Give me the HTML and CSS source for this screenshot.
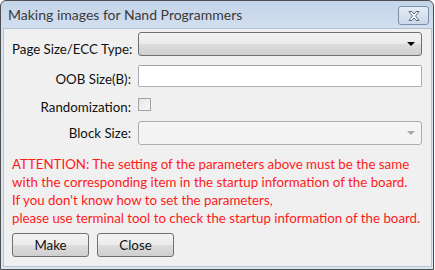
FILE: index.html
```html
<!doctype html>
<html lang="en">
<head>
<meta charset="utf-8">
<title>Making images for Nand Programmers</title>
<link rel="stylesheet" href="styles.css">
</head>
<body>
<div class="window">
  <div class="titlebar">
    <span class="title">Making images for Nand Programmers</span>
    <button type="button" class="btn-close" aria-label="Close">
      <svg width="16" height="12" viewBox="0 0 16 12">
        <path d="M3 1.5h3l2 2.6 2-2.6h3l-3.5 4.5 3.5 4.5h-3l-2-2.6-2 2.6h-3l3.5-4.5z" fill="#fff" stroke="#5b6a80" stroke-width="1" stroke-linejoin="round"/>
      </svg>
    </button>
  </div>

  <div class="client">
    <div class="form">
      <label for="page_size">Page Size/ECC Type:</label>
      <div class="combo" id="page_size" tabindex="0"><span class="arrow"></span></div>

      <label for="oob_size">OOB Size(B):</label>
      <input id="oob_size" class="edit" type="text">

      <label for="randomize">Randomization:</label>
      <div class="check-cell"><input id="randomize" class="check" type="checkbox"></div>

      <label for="block_size">Block Size:</label>
      <div class="combo disabled" id="block_size"><span class="arrow"></span></div>
    </div>

    <p class="warning">
      ATTENTION: The setting of the parameters above must be the same<br>
      with the corresponding item in the startup information of the board.<br>
      If you don't know how to set the parameters,<br>
      please use terminal tool to check the startup information of the board.
    </p>

    <div class="buttons">
      <button type="button" class="push">Make</button>
      <button type="button" class="push">Close</button>
    </div>
  </div>
</div>
</body>
</html>
```
FILE: styles.css
```css
html, body {
  margin: 0;
  padding: 0;
  background: #fff;
}
body {
  font-family: Lato, "Liberation Sans", sans-serif;
  font-size: 13.3px;
  color: #111;
}
.window {
  width: 434px;
  height: 270px;
  box-sizing: border-box;
  border: 1px solid #4d4d4d;
  border-radius: 6px 6px 0 0;
  background: linear-gradient(#c4d4e9, #d9e4f2 40px, #dbe6f3);
  display: flex;
  flex-direction: column;
}
.titlebar {
  height: 27px;
  display: flex;
  align-items: center;
  justify-content: space-between;
  padding: 0 4px 0 7px;
}
.title {
  font-size: 14px;
  color: #3a3a3a;
}
.btn-close {
  width: 31px;
  height: 19px;
  margin-top: 2px;
  padding: 0;
  display: flex;
  align-items: center;
  justify-content: center;
  border: 1px solid #7d8ea8;
  border-radius: 3px;
  background: linear-gradient(#e4ecf6, #cbd8ea);
}
.client {
  flex: 1;
  margin: 0 1px 2px 2px;
  border: 1px solid #b4c2d4;
  background: #f0f0f0;
  padding: 3px 8px 0 8px;
  overflow: hidden;
}
.form {
  display: grid;
  grid-template-columns: 119px 284px;
  column-gap: 7px;
  align-items: center;
}
.form label {
  text-align: right;
  color: #111;
  white-space: nowrap;
}
.combo {
  position: relative;
  height: 24px;
  box-sizing: border-box;
  border: 1px solid #707070;
  border-radius: 3px;
  background: linear-gradient(#f2f2f2, #ebebeb 50%, #dddddd 51%, #cfcfcf);
  margin-bottom: 9px;
}
.combo .arrow {
  position: absolute;
  right: 6px;
  top: 9px;
  border-left: 4px solid transparent;
  border-right: 4px solid transparent;
  border-top: 4px solid #000;
}
.combo.disabled {
  border-color: #adadad;
  background: #f4f4f4;
  margin-bottom: 0;
}
.combo.disabled .arrow {
  border-top-color: #a6a6a6;
}
.edit {
  height: 22px;
  box-sizing: border-box;
  border: 1px solid #abadb3;
  border-top-color: #a4a4a4;
  border-radius: 2px;
  background: #fff;
  margin: 0 0 6px 0;
  padding: 0 3px;
  font: inherit;
}
.check-cell {
  height: 22px;
  display: flex;
  align-items: center;
  margin-bottom: 6px;
}
.check {
  appearance: none;
  width: 13px;
  height: 13px;
  margin: 0;
  box-sizing: border-box;
  border: 1px solid #a3a3a3;
  background: linear-gradient(135deg, #e6e6e6, #f8f8f8);
}
.warning {
  margin: 10px 0 0 0;
  color: #ff1a1a;
  line-height: 18px;
  white-space: nowrap;
}
.buttons {
  display: flex;
  gap: 8px;
  margin-top: 6px;
}
.push {
  width: 77px;
  height: 24px;
  padding: 0;
  border: 1px solid #707070;
  border-radius: 3px;
  background: linear-gradient(#f2f2f2, #ebebeb 50%, #dddddd 51%, #cfcfcf);
  font: inherit;
  color: #111;
}
```
